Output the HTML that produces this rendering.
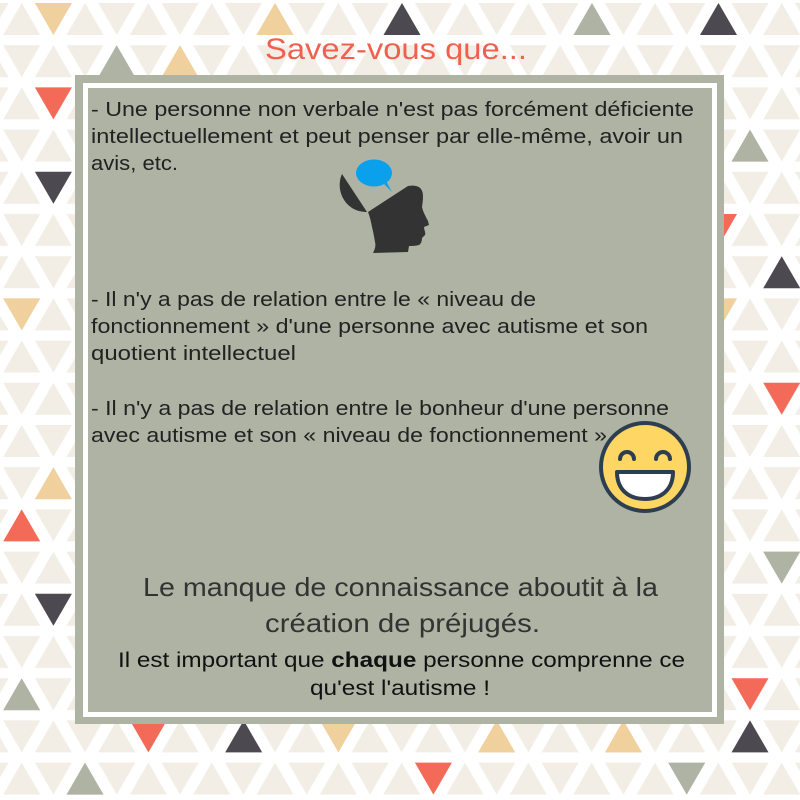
<!DOCTYPE html>
<html><head><meta charset="utf-8"><style>
html,body{margin:0;padding:0;width:800px;height:800px;overflow:hidden;background:#fff}
svg{display:block}
.b{font-family:"Liberation Sans",sans-serif;font-size:20px;fill:#222}
.c{font-family:"Liberation Sans",sans-serif;fill:#333;text-anchor:start}
</style></head><body>
<svg width="800" height="800" viewBox="0 0 800 800" xmlns="http://www.w3.org/2000/svg">
<defs>
<pattern id="p" x="0" y="3" width="63.333" height="84.4" patternUnits="userSpaceOnUse">
<g fill="#f2eee6">
<polygon points="21.7,0 3.2,32 40.2,32"/>
<polygon points="34.9,0 71.9,0 53.4,32"/>
<polygon points="-28.4,0 8.6,0 -9.9,32"/>
<polygon points="53.4,42.2 34.9,74.2 71.9,74.2"/>
<polygon points="-9.9,42.2 -28.4,74.2 8.6,74.2"/>
<polygon points="3.2,42.2 40.2,42.2 21.7,74.2"/>
</g>
</pattern>
</defs>
<rect width="800" height="800" fill="#fff"/>
<rect width="800" height="800" fill="url(#p)"/>
<g fill="#f0d09c">
<polygon points="34.9,3 71.9,3 53.4,35"/>
<polygon points="275,3 256.5,35 293.5,35"/>
<polygon points="180,45.2 161.5,77.2 198.5,77.2"/>
<polygon points="3.2,298.4 40.2,298.4 21.7,330.4"/>
<polygon points="700,298.4 737,298.4 718.5,330.4"/>
<polygon points="53.4,467.2 34.9,499.2 71.9,499.2"/>
<polygon points="319.9,720.4 356.9,720.4 338.4,752.4"/>
<polygon points="496.7,720.4 478.2,752.4 515.2,752.4"/>
<polygon points="623.4,720.4 604.9,752.4 641.9,752.4"/>
</g>
<g fill="#4c4950">
<polygon points="402,3 383.5,35 420.5,35"/>
<polygon points="718.5,3 700,35 737,35"/>
<polygon points="34.9,171.8 71.9,171.8 53.4,203.8"/>
<polygon points="781.7,256.2 763.2,288.2 800.2,288.2"/>
<polygon points="34.9,593.8 71.9,593.8 53.4,625.8"/>
<polygon points="243.7,720.4 225.2,752.4 262.2,752.4"/>
<polygon points="750,720.4 731.5,752.4 768.5,752.4"/>
</g>
<g fill="#aeb3a4">
<polygon points="592,3 573.5,35 610.5,35"/>
<polygon points="116.7,45.2 98.2,77.2 135.2,77.2"/>
<polygon points="750,129.6 731.5,161.6 768.5,161.6"/>
<polygon points="763.2,551.6 800.2,551.6 781.7,583.6"/>
<polygon points="21.7,678.2 3.2,710.2 40.2,710.2"/>
<polygon points="85,762.6 66.5,794.6 103.5,794.6"/>
<polygon points="668.2,762.6 705.2,762.6 686.7,794.6"/>
</g>
<g fill="#f46a58">
<polygon points="34.9,87.4 71.9,87.4 53.4,119.4"/>
<polygon points="700,214 737,214 718.5,246"/>
<polygon points="763.2,382.8 800.2,382.8 781.7,414.8"/>
<polygon points="21.7,509.4 3.2,541.4 40.2,541.4"/>
<polygon points="731.5,678.2 768.5,678.2 750,710.2"/>
<polygon points="129.9,720.4 166.9,720.4 148.4,752.4"/>
<polygon points="414.9,762.6 451.9,762.6 433.4,794.6"/>
</g>

<text x="265" y="59" font-family="Liberation Sans,sans-serif" font-size="30" fill="#f0604f" textLength="262" lengthAdjust="spacingAndGlyphs">Savez-vous que...</text>

<rect x="75" y="75" width="649" height="649" fill="#aeb3a4"/>
<rect x="83" y="83" width="634" height="634" fill="#fff"/>
<rect x="88" y="88" width="624" height="624" fill="#aeb3a4"/>

<text class="b" x="91" y="116" textLength="603" lengthAdjust="spacingAndGlyphs">- Une personne non verbale n'est pas forcément déficiente</text>
<text class="b" x="91" y="143" textLength="592" lengthAdjust="spacingAndGlyphs">intellectuellement et peut penser par elle-même, avoir un</text>
<text class="b" x="91" y="170" textLength="87" lengthAdjust="spacingAndGlyphs">avis, etc.</text>

<text class="b" x="91" y="306" textLength="445" lengthAdjust="spacingAndGlyphs">- Il n'y a pas de relation entre le « niveau de</text>
<text class="b" x="91" y="333" textLength="557" lengthAdjust="spacingAndGlyphs">fonctionnement » d'une personne avec autisme et son</text>
<text class="b" x="91" y="360" textLength="205" lengthAdjust="spacingAndGlyphs">quotient intellectuel</text>

<text class="b" x="91" y="415" textLength="578" lengthAdjust="spacingAndGlyphs">- Il n'y a pas de relation entre le bonheur d'une personne</text>
<text class="b" x="91" y="442" textLength="516" lengthAdjust="spacingAndGlyphs">avec autisme et son « niveau de fonctionnement »</text>

<!-- head icon -->
<ellipse cx="374" cy="173" rx="18" ry="13.5" fill="#0aa0ec"/>
<polygon points="382,182 392,192 386,181" fill="#0aa0ec"/>
<path d="M342,174 C337,185 340,200 352,208 C357,211 362,212 367,212 Z" fill="#333"/>
<path d="M368,212 L408,186 C414,185 419,186 421,189 C424,193 423,200 422,207 C423,212 426,217 428,221 L429,225 L424,227 C424,230 426,233 425,235 L422,238 C422,241 421,244 419,245 C415,246 412,246 409,246 L408,252 L373,253 C375,249 376,246 375,242 C374,236 373,231 372,227 C371,222 370,217 368,212 Z" fill="#333"/>

<!-- smiley -->
<circle cx="645" cy="467" r="44" fill="#fdd663" stroke="#2d3e50" stroke-width="4"/>
<path d="M620,459 A7,7 0 0 1 634,459" fill="none" stroke="#2d3e50" stroke-width="4" stroke-linecap="round"/>
<path d="M656,459 A7,7 0 0 1 670,459" fill="none" stroke="#2d3e50" stroke-width="4" stroke-linecap="round"/>
<path d="M617,472 L673,472 C673,490 661,499 645,499 C629,499 617,490 617,472 Z" fill="#fff" stroke="#2d3e50" stroke-width="4" stroke-linejoin="round"/>

<text class="c" x="143" y="596" font-size="26" textLength="515" lengthAdjust="spacingAndGlyphs">Le manque de connaissance aboutit à la</text>
<text class="c" x="265" y="632" font-size="26" textLength="275" lengthAdjust="spacingAndGlyphs">création de préjugés.</text>
<text x="118" y="667" font-family="Liberation Sans,sans-serif" font-size="21" fill="#111" textLength="567" lengthAdjust="spacingAndGlyphs">Il est important que <tspan font-weight="bold">chaque</tspan> personne comprenne ce</text>
<text x="310" y="695" font-family="Liberation Sans,sans-serif" font-size="21" fill="#111" textLength="180" lengthAdjust="spacingAndGlyphs">qu'est l'autisme !</text>
</svg>
</body></html>
